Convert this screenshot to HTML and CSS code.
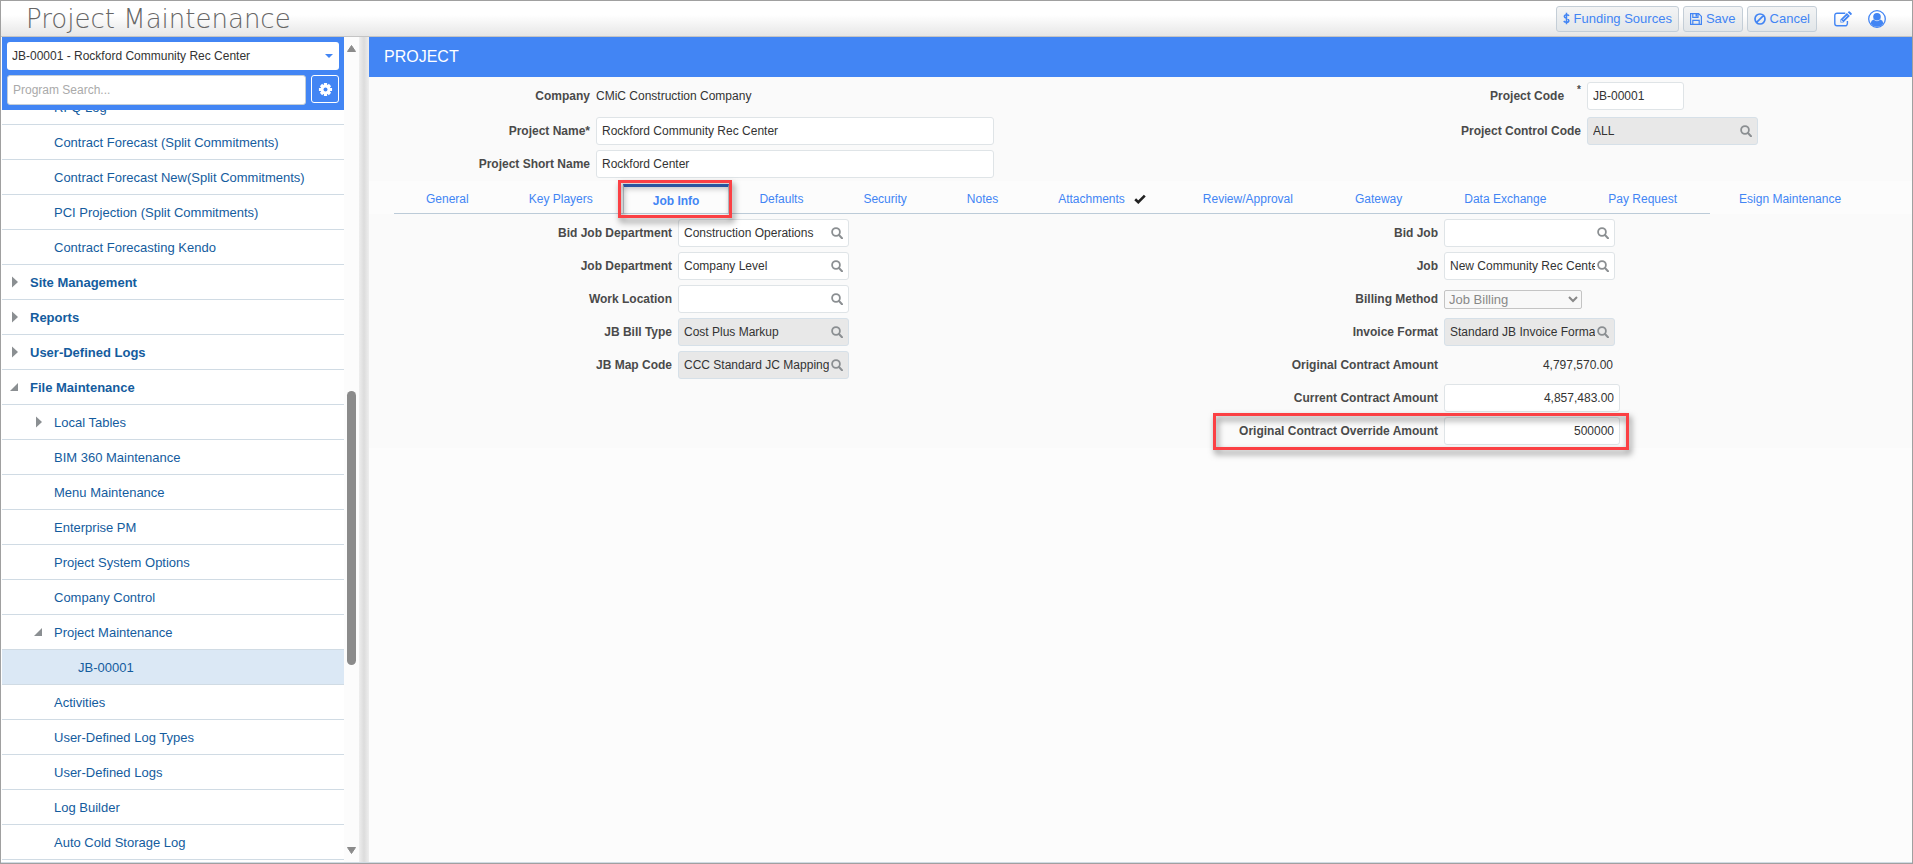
FILE: index.html
```html
<!DOCTYPE html>
<html lang="en">
  <head>
    <meta charset="UTF-8" />
    <meta name="viewport" content="width=device-width, initial-scale=1.0" />
    <title>Project Maintenance</title>
    <link rel="stylesheet" href="styles.css">
  </head>
  <body>
    <!-- Shared icons -->
    <svg class="icon-defs" aria-hidden="true">
      <symbol id="icon-search" viewBox="0 0 12 12">
        <circle cx="5" cy="5" r="3.9" fill="none" stroke="currentColor" stroke-width="1.8" />
        <path d="M8 8l3 3.2" stroke="currentColor" stroke-width="2" stroke-linecap="round" />
      </symbol>
      <symbol id="icon-closed" viewBox="0 0 6 12">
        <path d="M0 0.5L6 6L0 11.5z" fill="currentColor" />
      </symbol>
      <symbol id="icon-open" viewBox="0 0 8 8">
        <path d="M8 0V8H0z" fill="currentColor" />
      </symbol>
    </svg>

    <header class="topbar">
      <h1>Project Maintenance</h1>
      <div class="actions">
        <button type="button" class="btn">
          <svg class="icon-dollar" viewBox="0 0 8 14" aria-hidden="true">
            <path d="M7 3.9C6.2 3.2 5.2 2.8 4 2.8C2.5 2.8 1.5 3.5 1.5 4.7C1.5 7.5 6.7 6.2 6.7 9.2C6.7 10.5 5.6 11.3 4 11.3C2.6 11.3 1.6 10.8 0.8 10M4 0.5V13.5" fill="none" stroke="currentColor" stroke-width="1.7" />
          </svg>
          Funding Sources
        </button>
        <button type="button" class="btn">
          <svg class="icon-btn" viewBox="0 0 12 12" aria-hidden="true">
            <path d="M0.6 0.6H8.6L11.4 3.4V11.4H0.6zM2.8 0.6V4.3H8V0.6M2.8 11.4V7.3H9.2V11.4" fill="none" stroke="currentColor" stroke-width="1.2" />
            <path d="M5.5 1H7.2V3.6H5.5z" fill="currentColor" />
          </svg>
          Save
        </button>
        <button type="button" class="btn">
          <svg class="icon-btn" viewBox="0 0 12 12" aria-hidden="true">
            <path d="M11 6A5 5 0 1 1 1 6A5 5 0 1 1 11 6M9.4 2.6L2.6 9.4" fill="none" stroke="currentColor" stroke-width="1.7" />
          </svg>
          Cancel
        </button>
        <button type="button" class="icon-link edit" aria-label="Edit">
          <svg viewBox="0 0 18 16" aria-hidden="true">
            <path d="M11.3 2.2H3A2.2 2.2 0 0 0 0.8 4.4V12.6A2.2 2.2 0 0 0 3 14.8H11.2A2.2 2.2 0 0 0 13.4 12.6V10" fill="none" stroke="currentColor" stroke-width="1.4" />
            <path d="M6.4 11.6V8.6L12.9 2.1L15.9 5.1L9.4 11.6zM13.7 1.3L14.6 0.4Q15.2 -0.1 15.8 0.4L17.6 2.2Q18.1 2.8 17.6 3.4L16.7 4.3z" fill="currentColor" />
            <path d="M7.4 9.2V10.6H8.8M9 8.8L13.2 4.6" fill="none" stroke="#f4f4f4" stroke-width="0.9" />
          </svg>
        </button>
        <button type="button" class="icon-link user" aria-label="User">
          <svg viewBox="0 0 18 18" aria-hidden="true">
            <circle cx="9" cy="9" r="8.3" fill="none" stroke="currentColor" stroke-width="1.3" />
            <circle cx="9" cy="6.8" r="3.8" fill="currentColor" />
            <path d="M2.6 13.2Q3.2 10.3 5.6 9.6Q9 13 12.4 9.6Q14.8 10.3 15.4 13.2Q12.8 16.7 9 16.7Q5.2 16.7 2.6 13.2z" fill="currentColor" />
          </svg>
        </button>
      </div>
    </header>

    <div class="layout">
      <aside class="sidebar">
        <div class="sidebar-main">
          <div class="sidebar-head">
            <div class="project-picker">
              <select class="project-select" aria-label="Project">
                <option>JB-00001 - Rockford Community Rec Center</option>
              </select>
            </div>
            <div class="search-row">
              <input type="text" class="program-search" placeholder="Program Search..." aria-label="Program Search" />
              <button type="button" class="gear" aria-label="Settings">
                <svg viewBox="0 0 16 16" aria-hidden="true">
                  <g stroke="currentColor" stroke-width="3.4">
                    <path d="M8 1V15M1 8H15M3.2 3.2L12.8 12.8M12.8 3.2L3.2 12.8" />
                  </g>
                  <circle cx="8" cy="8" r="5.3" fill="currentColor" />
                  <circle cx="8" cy="8" r="2.1" fill="#4285f4" />
                </svg>
              </button>
            </div>
          </div>
          <nav class="menu" aria-label="Programs">
            <a href="#" class="level-2">RFQ Log</a>
            <a href="#" class="level-2">Contract Forecast (Split Commitments)</a>
            <a href="#" class="level-2">Contract Forecast New(Split Commitments)</a>
            <a href="#" class="level-2">PCI Projection (Split Commitments)</a>
            <a href="#" class="level-2">Contract Forecasting Kendo</a>
            <a href="#" class="level-1"><svg class="closed"><use href="#icon-closed" /></svg>Site Management</a>
            <a href="#" class="level-1"><svg class="closed"><use href="#icon-closed" /></svg>Reports</a>
            <a href="#" class="level-1"><svg class="closed"><use href="#icon-closed" /></svg>User-Defined Logs</a>
            <a href="#" class="level-1"><svg class="open"><use href="#icon-open" /></svg>File Maintenance</a>
            <a href="#" class="level-2 parent"><svg class="closed"><use href="#icon-closed" /></svg>Local Tables</a>
            <a href="#" class="level-2">BIM 360 Maintenance</a>
            <a href="#" class="level-2">Menu Maintenance</a>
            <a href="#" class="level-2">Enterprise PM</a>
            <a href="#" class="level-2">Project System Options</a>
            <a href="#" class="level-2">Company Control</a>
            <a href="#" class="level-2 parent"><svg class="open"><use href="#icon-open" /></svg>Project Maintenance</a>
            <a href="#" class="level-3 selected">JB-00001</a>
            <a href="#" class="level-2">Activities</a>
            <a href="#" class="level-2">User-Defined Log Types</a>
            <a href="#" class="level-2">User-Defined Logs</a>
            <a href="#" class="level-2">Log Builder</a>
            <a href="#" class="level-2">Auto Cold Storage Log</a>
          </nav>
        </div>
        <div class="scrollbar" aria-hidden="true">
          <svg class="arrow" viewBox="0 0 9 7"><path d="M4.5 0.5L8.5 6.5H0.5z" fill="#8b8b8b" stroke="#8b8b8b" stroke-linejoin="round" /></svg>
          <div class="track">
            <div class="track-space"></div>
            <div class="thumb"></div>
            <div class="track-rest"></div>
          </div>
          <svg class="arrow" viewBox="0 0 9 7"><path d="M4.5 6.5L8.5 0.5H0.5z" fill="#8b8b8b" stroke="#8b8b8b" stroke-linejoin="round" /></svg>
        </div>
      </aside>
      <div class="splitter"></div>

      <main class="content">
        <h2>PROJECT</h2>

        <section class="project-header">
          <div class="fields header-left">
            <span class="label">Company</span>
            <span class="value">CMiC Construction Company</span>
            <label for="projectName">Project Name*</label>
            <input type="text" id="projectName" class="text-input" value="Rockford Community Rec Center" />
            <label for="shortName">Project Short Name</label>
            <input type="text" id="shortName" class="text-input" value="Rockford Center" />
          </div>
          <div class="fields header-right">
            <label for="projectCode">Project Code<sup>*</sup></label>
            <input type="text" id="projectCode" class="text-input code" value="JB-00001" />
            <label for="controlCode">Project Control Code</label>
            <div class="lookup disabled">
              <input type="text" id="controlCode" value="ALL" readonly />
              <svg><use href="#icon-search" /></svg>
            </div>
          </div>
        </section>

        <nav class="tabs" aria-label="Project sections">
          <a href="#">General</a>
          <a href="#">Key Players</a>
          <a href="#" class="active">Job Info<span class="callout"></span></a>
          <a href="#">Defaults</a>
          <a href="#">Security</a>
          <a href="#">Notes</a>
          <a href="#" class="checked">Attachments<svg class="check" viewBox="0 0 12 10" aria-hidden="true"><path d="M1.2 5.2L4.3 8.2L10.8 1.6" fill="none" stroke="#222" stroke-width="2.6" /></svg></a>
          <a href="#" class="wide">Review/Approval</a>
          <a href="#" class="wide">Gateway</a>
          <a href="#" class="wide">Data Exchange</a>
          <a href="#" class="wide">Pay Request</a>
          <a href="#" class="wide">Esign Maintenance</a>
        </nav>

        <section class="job-info">
          <div class="fields job-left">
            <label for="bidDept">Bid Job Department</label>
            <div class="lookup">
              <input type="text" id="bidDept" value="Construction Operations" />
              <svg><use href="#icon-search" /></svg>
            </div>
            <label for="jobDept">Job Department</label>
            <div class="lookup">
              <input type="text" id="jobDept" value="Company Level" />
              <svg><use href="#icon-search" /></svg>
            </div>
            <label for="workLocation">Work Location</label>
            <div class="lookup">
              <input type="text" id="workLocation" value="" />
              <svg><use href="#icon-search" /></svg>
            </div>
            <label for="billType">JB Bill Type</label>
            <div class="lookup disabled">
              <input type="text" id="billType" value="Cost Plus Markup" readonly />
              <svg><use href="#icon-search" /></svg>
            </div>
            <label for="mapCode">JB Map Code</label>
            <div class="lookup disabled">
              <input type="text" id="mapCode" value="CCC Standard JC Mapping" readonly />
              <svg><use href="#icon-search" /></svg>
            </div>
          </div>

          <div class="fields job-right">
            <label for="bidJob">Bid Job</label>
            <div class="lookup">
              <input type="text" id="bidJob" value="" />
              <svg><use href="#icon-search" /></svg>
            </div>
            <label for="job">Job</label>
            <div class="lookup">
              <input type="text" id="job" value="New Community Rec Center" />
              <svg><use href="#icon-search" /></svg>
            </div>
            <label for="billingMethod">Billing Method</label>
            <select id="billingMethod" class="billing-method" disabled>
              <option>Job Billing</option>
            </select>
            <label for="invoiceFormat">Invoice Format</label>
            <div class="lookup disabled">
              <input type="text" id="invoiceFormat" value="Standard JB Invoice Format" readonly />
              <svg><use href="#icon-search" /></svg>
            </div>
            <span class="label">Original Contract Amount</span>
            <span class="value amount">4,797,570.00</span>
            <label for="currentAmount">Current Contract Amount</label>
            <input type="text" id="currentAmount" class="text-input amount" value="4,857,483.00" />
            <label for="overrideAmount">Original Contract Override Amount</label>
            <input type="text" id="overrideAmount" class="text-input amount" value="500000" />
            <span class="callout"></span>
          </div>
        </section>
      </main>
    </div>
  </body>
</html>
```

FILE: styles.css
```css
* {
  box-sizing: border-box;
}

body {
  margin: 0;
  height: 100vh;
  display: flex;
  flex-direction: column;
  overflow: hidden;
  border: 1px solid #a0a0a0;
  background: #fcfcfc;
  color: #333;
  font-family: Arial, "Liberation Sans", sans-serif;
  font-size: 12px;
}

input,
select,
button {
  margin: 0;
  font-family: inherit;
  font-size: 12px;
  color: #333;
}

button {
  cursor: pointer;
}

a {
  text-decoration: none;
}

.icon-defs {
  position: absolute;
  width: 0;
  height: 0;
}

/* Top bar */
.topbar {
  flex: none;
  display: flex;
  align-items: center;
  justify-content: space-between;
  height: 36px;
  padding: 0 26px 0 25px;
  border-bottom: 1px solid #c4c4c4;
  background: linear-gradient(#fff 40%, #e6e6e6);
}

.topbar h1 {
  margin: 0;
  font-family: "DejaVu Sans", sans-serif;
  font-size: 26px;
  font-weight: 200;
  line-height: 34px;
  color: #666;
}

.actions {
  display: flex;
  align-items: center;
  gap: 4px;
}

.btn {
  display: flex;
  align-items: center;
  gap: 4px;
  height: 26px;
  padding: 0 6px;
  border: 1px solid #c4ced7;
  border-radius: 3px;
  background: linear-gradient(#f3f4f5, #e2e6e9);
  color: #4285f4;
  font-size: 13px;
}

.icon-dollar {
  width: 7px;
  height: 13px;
}

.icon-btn {
  width: 12px;
  height: 12px;
}

.icon-link {
  display: flex;
  padding: 0;
  border: 0;
  background: none;
  color: #4285f4;
}

.icon-link svg {
  width: 18px;
  height: 18px;
}

.edit {
  margin-left: 13px;
}

.user {
  margin-left: 12px;
}

/* Layout */
.layout {
  flex: 1;
  min-height: 0;
  display: flex;
  border-bottom: 1px solid #d0dbe4;
}

.sidebar {
  flex: none;
  width: 358px;
  display: flex;
}

.sidebar-main {
  flex: 1;
  display: flex;
  flex-direction: column;
  min-height: 0;
  padding-left: 1px;
  background: #fff;
}

.sidebar-head {
  flex: none;
  display: flex;
  flex-direction: column;
  gap: 5px;
  padding: 5px;
  background: #4285f4;
}

.project-picker {
  position: relative;
  display: flex;
}

/* Dropdown arrow over the select */
.project-picker::after {
  content: "";
  position: absolute;
  top: 12px;
  right: 6px;
  border: 4px solid transparent;
  border-top-color: #4285f4;
  border-bottom: 0;
  pointer-events: none;
}

.project-select {
  appearance: none;
  width: 100%;
  height: 28px;
  padding: 0 5px;
  border: 0;
  border-radius: 3px;
  background: #fff;
}

.search-row {
  display: flex;
  align-items: flex-start;
  gap: 5px;
}

.program-search {
  flex: 1;
  min-width: 0;
  height: 30px;
  padding: 0 5px;
  border: 1px solid #c4ced7;
  border-radius: 3px;
}

.program-search::placeholder {
  color: #aaa;
}

.gear {
  display: flex;
  align-items: center;
  justify-content: center;
  width: 28px;
  height: 28px;
  padding: 0;
  border: 1px solid #fff;
  border-radius: 3px;
  background: #4285f4;
  color: #fff;
}

.gear svg {
  width: 15px;
  height: 15px;
}

/* Program menu, scrolled part way into the first row */
.menu {
  flex: 1;
  min-height: 0;
  display: flex;
  flex-direction: column;
  justify-content: flex-end;
  overflow: hidden;
  padding-bottom: 2px;
}

.menu a {
  flex: none;
  display: flex;
  align-items: center;
  height: 35px;
  border-bottom: 1px solid #d0dbe4;
  color: #145c9e;
  font-size: 13px;
}

.menu .level-1 {
  padding-left: 10px;
  font-weight: bold;
}

.menu .level-2 {
  padding-left: 52px;
}

.menu .parent {
  padding-left: 34px;
}

.menu .level-3 {
  padding-left: 76px;
}

.menu .selected {
  background: #dbe8f5;
}

.menu svg {
  flex: none;
  color: #8b8f92;
}

.menu .closed {
  width: 6px;
  height: 12px;
  margin-right: 12px;
}

.menu .open {
  width: 8px;
  height: 8px;
  margin-right: 12px;
  margin-left: -2px;
}

.scrollbar {
  flex: none;
  width: 15px;
  display: flex;
  flex-direction: column;
  align-items: center;
  padding: 8px 0;
  background: #fcfcfc;
}

.arrow {
  flex: none;
  width: 9px;
  height: 7px;
}

.track {
  flex: 1;
  display: flex;
  flex-direction: column;
}

.track-space {
  flex: 339;
}

.thumb {
  flex: 273;
  width: 9px;
  border-radius: 5px;
  background: #8b8b8b;
}

.track-rest {
  flex: 182;
}

.splitter {
  flex: none;
  width: 10px;
  background: linear-gradient(90deg, #eee, #dcdcdc 50%, #eee);
}

/* Main panel */
.content {
  flex: 1;
  min-width: 0;
}

.content h2 {
  margin: 0;
  padding: 0 15px;
  background: #4285f4;
  color: #fff;
  font-size: 16px;
  font-weight: normal;
  line-height: 40px;
}

.project-header,
.job-info {
  display: flex;
  justify-content: space-between;
  background: #fafafa;
}

.project-header {
  padding: 5px 154px 3px 0;
}

.job-info {
  padding: 5px 292px 3px 0;
}

.fields {
  display: grid;
  column-gap: 6px;
  row-gap: 5px;
  grid-auto-rows: 28px;
  align-content: start;
  align-items: center;
}

.header-left {
  grid-template-columns: 221px 398px;
}

.header-right {
  grid-template-columns: auto 171px;
}

.project-header .fields {
  grid-template-rows: 30px;
}

/* First row keeps a little more room below it */
.project-header .fields > :nth-child(-n + 2) {
  margin-bottom: 2px;
}

.job-left {
  grid-template-columns: 303px 171px;
}

.job-right {
  position: relative;
  grid-template-columns: auto 176px;
}

label,
.label {
  color: #4a4a4a;
  font-weight: bold;
  text-align: right;
}

label sup {
  margin-left: 13px;
  font-size: 10px;
  line-height: 0;
  vertical-align: 7px;
}

.text-input {
  width: 100%;
  height: 28px;
  padding: 0 5px;
  border: 1px solid #dfe4e7;
  border-radius: 3px;
  background: #fff;
}

.code {
  width: 97px;
}

.amount {
  text-align: right;
}

.value.amount {
  width: 169px;
}

.lookup {
  display: flex;
  align-items: center;
  width: 171px;
  height: 28px;
  padding: 0 5px;
  border: 1px solid #dfe4e7;
  border-radius: 3px;
  background: #fff;
}

.lookup.disabled {
  border-color: #d6e0e8;
  background: #e8e8e8;
}

.lookup input {
  flex: 1;
  min-width: 0;
  padding: 0;
  border: 0;
  background: none;
}

.lookup svg {
  flex: none;
  width: 12px;
  height: 12px;
  margin-left: 2px;
  color: #8b8f92;
}

.billing-method {
  width: 138px;
  height: 19px;
  padding: 0;
  border: 1px solid #c4c4c4;
  border-radius: 2px;
  background: #f8f8f8;
  color: #888;
  font-size: 13px;
  opacity: 1;
}

/* Tabs */
.tabs {
  display: flex;
  height: 33px;
  margin: 0 202px 0 25px;
  padding-left: 2px;
  border-bottom: 1px solid #bccbd8;
}

.tabs a {
  flex: none;
  display: flex;
  align-items: center;
  padding: 3px 30px 0;
  color: #4285f4;
}

.tabs .checked {
  padding-right: 26px;
}

.tabs .wide {
  padding-right: 31px;
  padding-left: 31px;
}

.tabs .active {
  position: relative;
  height: 30px;
  margin-top: 3px;
  border: 1px solid #c0c8d0;
  border-top: 3px solid #3367c0;
  border-bottom: 0;
  padding: 0 29px;
  font-weight: bold;
}

.check {
  width: 12px;
  height: 10px;
  margin-left: 9px;
}

/* Red frames drawn over the highlighted items */
.callout {
  position: absolute;
  border: 3px solid #fb4044;
  filter: drop-shadow(2px 4px 3px rgba(0, 0, 0, 0.5));
  pointer-events: none;
}

.tabs .callout {
  inset: -7px -4px -4px -6px;
}

.job-right .callout {
  right: -9px;
  bottom: -5px;
  left: -26px;
  height: 37px;
}
```
